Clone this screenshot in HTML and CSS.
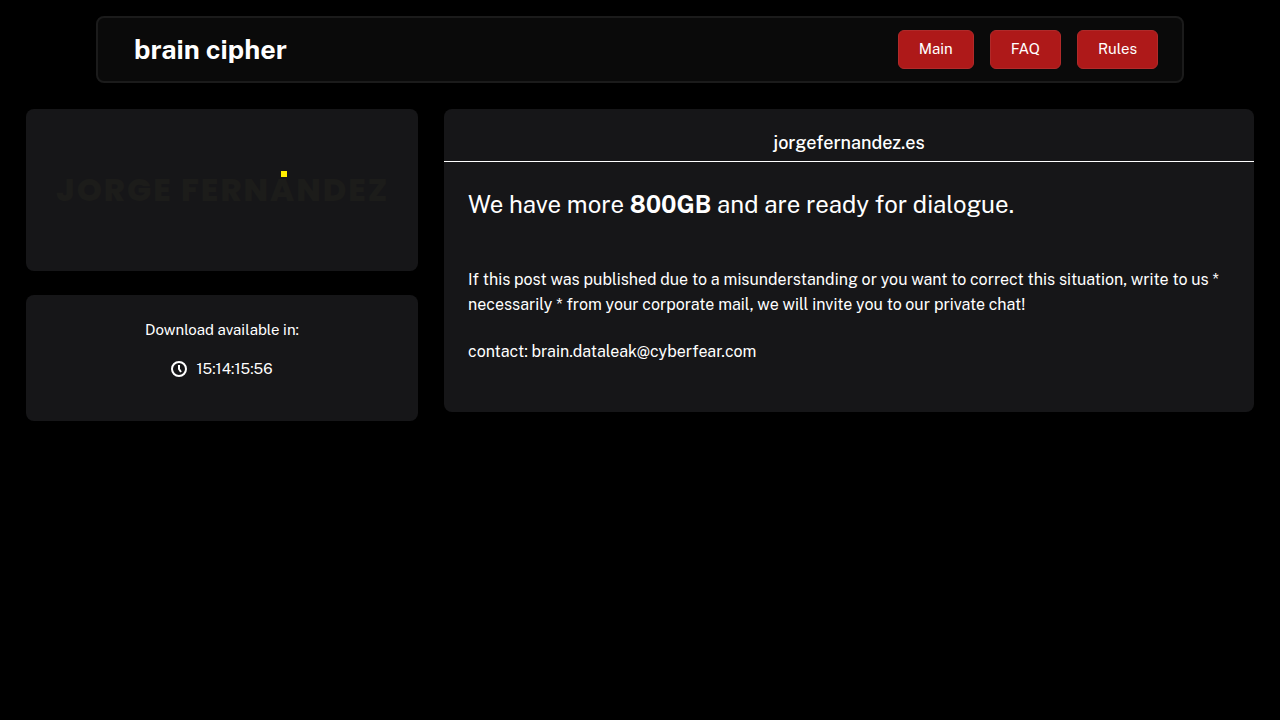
FILE: index.html
```html
<!DOCTYPE html>
<html lang="en">
<head>
<meta charset="utf-8">
<meta name="viewport" content="width=device-width, initial-scale=1">
<title>brain cipher</title>
<link rel="stylesheet" href="styles.css">
</head>
<body>
<header class="site-header">
  <div class="brand">brain cipher</div>
  <nav class="nav">
    <a class="nav-link" href="#main">Main</a>
    <a class="nav-link" href="#faq">FAQ</a>
    <a class="nav-link" href="#rules">Rules</a>
  </nav>
</header>
<main class="layout" id="main">
  <aside class="sidebar">
    <section class="card logo-card">
      <svg class="logo" viewBox="0 0 332 40" role="img" aria-label="Jorge Fernández">
        <text class="logo-text" x="0" y="31">JORGE FERNANDEZ</text>
        <rect class="logo-accent" x="225" y="1" width="6" height="6"/>
      </svg>
    </section>
    <section class="card timer-card">
      <p class="timer-label">Download available in:</p>
      <div class="timer">
        <svg class="clock" viewBox="0 0 16 16" aria-hidden="true">
          <circle cx="8" cy="8" r="7"/>
          <path d="M8 4v4l2 3"/>
        </svg>
        <span>15:14:15:56</span>
      </div>
    </section>
  </aside>
  <article class="card post">
    <h1 class="post-title">jorgefernandez.es</h1>
    <div class="post-body">
      <p class="lead">We have more <strong>800GB</strong> and are ready for dialogue.</p>
      <p class="text">If this post was published due to a misunderstanding or you want to correct this situation, write to us * necessarily * from your corporate mail, we will invite you to our private chat!</p>
      <p class="text">contact: brain.dataleak@cyberfear.com</p>
    </div>
  </article>
</main>
</body>
</html>
```
FILE: styles.css
```css
* {
  box-sizing: border-box;
}

body {
  margin: 0;
  padding: 16px 0;
  background: #000;
  color: #fff;
  font-family: "Public Sans", Inter, sans-serif;
  font-size: 15px;
  line-height: 25px;
}

p, h1 {
  margin: 0;
}

.site-header {
  display: flex;
  align-items: center;
  justify-content: space-between;
  width: 85%;
  margin: 0 auto 26px;
  padding: 12px 24px 12px 36px;
  border: 2px solid #1b1b1b;
  border-radius: 8px;
  background: #0a0a0a;
}

.brand {
  padding-bottom: 2px;
  font-size: 27px;
  font-weight: 700;
  line-height: 36px;
}

.nav {
  display: flex;
  gap: 16px;
}

.nav-link {
  padding: 5px 20px 7px;
  border: 1px solid #b02a2a;
  border-radius: 6px;
  background: #ae1919;
  color: #fff;
  text-decoration: none;
}

.layout {
  display: grid;
  grid-template-columns: 392fr 810fr;
  gap: 26px;
  align-items: start;
  padding: 0 26px;
}

.sidebar {
  display: grid;
  gap: 24px;
}

.card {
  border-radius: 8px;
  background: #161618;
}

.logo-card {
  padding: 61px 30px;
}

.logo {
  display: block;
  width: 100%;
  overflow: visible;
}

.logo-text {
  font-family: Poppins, Lato, sans-serif;
  font-size: 32px;
  font-weight: 800;
  letter-spacing: 2px;
  fill: #1c1c1a;
}

.logo-accent {
  fill: #ffed00;
}

.timer-card {
  padding: 22px 24px 40px;
  text-align: center;
}

.timer {
  display: flex;
  align-items: center;
  justify-content: center;
  gap: 9px;
  margin-top: 14px;
}

.clock {
  width: 16px;
  height: 16px;
  fill: none;
  stroke: #fff;
  stroke-width: 2;
}

.post-title {
  padding: 21px 24px 5px;
  border-bottom: 1px solid #fff;
  font-size: 18px;
  font-weight: 500;
  line-height: 26px;
  text-align: center;
}

.post-body {
  padding: 24px 24px 48px;
}

.lead {
  margin-bottom: 44px;
  font-size: 24px;
  line-height: 37px;
}

.text {
  font-size: 16px;
}

.text + .text {
  margin-top: 22px;
}
```
